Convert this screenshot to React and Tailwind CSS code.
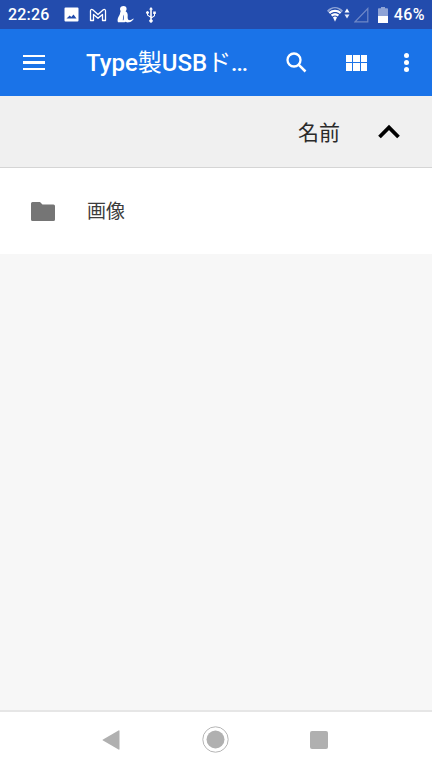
import React from 'react';

const CJK = "font-['Roboto','Noto_Sans_CJK_JP',sans-serif]";

function StatusBar() {
  return (
    <div className="h-[29px] bg-[#234cad] flex items-center text-white pl-[8px] pr-[7px]">
      <span className="text-[16px] font-medium leading-none tracking-[0.2px] w-[42px]">22:26</span>
      {/* picture */}
      <svg className="ml-[14px]" width="15" height="15" viewBox="0 0 15 15">
        <path fillRule="evenodd" fill="#fff" d="M1.5 0.5h12a1 1 0 0 1 1 1v12a1 1 0 0 1-1 1h-12a1 1 0 0 1-1-1v-12a1 1 0 0 1 1-1zM2.5 11.5h10l-3-4-2.2 2.6-1.6-1.6z" />
      </svg>
      {/* gmail-ish M */}
      <svg className="ml-[10px]" width="18" height="14" viewBox="0 0 18 14">
        <path d="M1.500 12.500V2.800c0-1.300 1.300-1.800 2.200-1L9 6.500l5.300-4.700c.9-.8 2.200-.3 2.200 1v9.700h-3V6.500L9 10.300 4.500 6.500v6z" fill="none" stroke="#fff" strokeWidth="1.300" strokeLinejoin="round" />
      </svg>
      {/* figure */}
      <svg className="ml-[10px]" width="17" height="18" viewBox="0 0 17 18">
        <path fill="#fff" d="M6.500 0c2 0 3.200 1.300 3.100 3 0 1-.4 1.700-1 2.200 1.400.7 2 2 2.100 3.600.1 1.500-.3 3 .2 4.300.3.800 1 1.200 1.900 1.200 1 0 2-.6 3.500-1.700l.4.400c-1.300 1.600-2.800 3-4.800 3.300-1.300.2-2.400 0-3.300-.6-.6.4-1.300.6-2.200.6H1c-.6-1.300-.5-2.800 0-4.200.5-1.500 1.500-2.800 1.900-4.200.3-1 .3-2 .8-2.900C3.200 4.300 3 3.700 3 3c0-1.700 1.500-3 3.500-3z" />
        <path fill="#234cad" d="M6.200 8.500c.9 1.500.8 3.300.4 5.200-.1.500-.5.700-.8.500.3-2 .4-3.700.4-5.700z" />
      </svg>
      {/* usb */}
      <svg className="ml-[11px]" width="12" height="16" viewBox="0 0 12 16">
        <path fill="#fff" d="M6 0l2 2.600H6.800v7.400l2.200-1.600V7H8.200V4.600h2.600V7h-.8v1.900L6.800 11.300v1.200a1.700 1.700 0 1 1-1.600 0V10.600L2 8.300V6.800a1.400 1.400 0 1 1 1 0v1l2.200 1.500V2.600H4z" />
      </svg>
      <div className="flex-1" />
      {/* wifi */}
      <svg width="16" height="15" viewBox="0 0 16 15">
        <path fill="#8ea3d6" d="M0 3.700C4.300-1.200 11.700-1.200 16 3.700l-1.500 1.700C11-.1 5-.1 1.500 5.400z" />
        <path fill="#fff" d="M1.700 5.200c3.500-3.300 9.100-3.300 12.600 0l-1.400 1.700c-2.800-2.400-7-2.400-9.800 0z" />
        <path fill="#fff" d="M3.900 7.700c2.400-2 5.800-2 8.200 0l-1.400 1.700c-1.600-1.200-3.800-1.200-5.400 0z" />
        <path fill="#fff" d="M6 10.200c1.200-.9 2.800-.9 4 0l-2 4.600z" />
      </svg>
      {/* data arrows */}
      <svg className="ml-[1px]" width="6" height="13" viewBox="0 0 6 13">
        <path fill="#fff" d="M3 0.500L5.500 4.500H0.500z" />
        <path fill="#e2e8f6" d="M0.500 6.500H5.500L3 10.500z" />
      </svg>
      {/* signal */}
      <svg className="ml-[4px]" width="15" height="16" viewBox="0 0 15 16">
        <path fill="none" stroke="#6f88c8" strokeWidth="1.200" d="M13.800 1.500V14.800H1z" />
      </svg>
      {/* battery */}
      <svg className="ml-[9px]" width="10" height="16" viewBox="0 0 10 16">
        <path fill="#8ea3d6" d="M3 0h4v1.300h2.200a.8.8 0 0 1 .8.8V9H0V2.100a.8.8 0 0 1 .8-.8H3z" />
        <path fill="#fff" d="M0 9h10v7H0z" />
      </svg>
      <span className="ml-[6px] text-[16px] font-medium leading-none tracking-[0.4px]">46%</span>
    </div>
  );
}

function Toolbar() {
  return (
    <div className="h-[67px] bg-[#1a73e8] flex items-center text-white">
      <div className="w-[86px] pl-[23px] shrink-0">
        <div className="w-[22px] flex flex-col gap-[4px]">
          <div className="h-[2.500px] bg-white" />
          <div className="h-[2.500px] bg-white" />
          <div className="h-[2.500px] bg-white" />
        </div>
      </div>
      <div className="w-[166px] shrink-0 text-[24px] font-medium leading-none whitespace-nowrap">
        Type<span className="font-normal">製</span>USB<span className="font-normal">ド</span>
        <span className="text-[20px] font-bold tracking-[-0.4px]">...</span>
      </div>
      <svg className="ml-[32px] -mt-[2px]" width="24" height="24" viewBox="0 0 24 24">
        <circle cx="10" cy="10" r="6.500" fill="none" stroke="#fff" strokeWidth="2.300" />
        <path d="M14.600 14.600L21.500 21.500" stroke="#fff" strokeWidth="2.500" />
      </svg>
      <div className="ml-[38px] w-[21px] grid grid-cols-3 gap-[1px]">
        {[0, 1, 2, 3, 4, 5].map((i) => (
          <div key={i} className="h-[7.500px] bg-white" />
        ))}
      </div>
      <div className="ml-[37px] flex flex-col gap-[2px]">
        <div className="w-[5px] h-[5px] rounded-full bg-white" />
        <div className="w-[5px] h-[5px] rounded-full bg-white" />
        <div className="w-[5px] h-[5px] rounded-full bg-white" />
      </div>
    </div>
  );
}

export default function App() {
  return (
    <div className={`w-[432px] h-[768px] flex flex-col bg-[#f7f7f7] overflow-hidden ${CJK}`}>
      <StatusBar />
      <Toolbar />

      {/* sort header */}
      <div className="h-[72px] bg-[#f0f0f0] border-b border-[#d5d5d5] flex items-center justify-end">
        <span className="text-[21px] text-[#2a2a2a] leading-none mr-[37px] pt-[3px]">名前</span>
        <svg className="mr-[31px]" width="24" height="15" viewBox="0 0 24 15">
          <path d="M2.500 13L12 3.500L21.500 13" fill="none" stroke="#000" strokeWidth="3.800" />
        </svg>
      </div>

      {/* row */}
      <div className="h-[86px] bg-white flex items-center">
        <svg className="ml-[31px]" width="24" height="19" viewBox="0 0 24 19">
          <path fill="#757575" d="M1.500 0h7.500l2.500 2.500h11a1.500 1.500 0 0 1 1.500 1.500V17.500a1.500 1.500 0 0 1-1.500 1.500H1.500A1.500 1.500 0 0 1 0 17.500V1.500A1.500 1.500 0 0 1 1.500 0z" />
        </svg>
        <span className="ml-[32px] text-[19px] text-[#3c3c3c] leading-none">画像</span>
      </div>

      <div className="flex-1" />

      {/* nav bar */}
      <div className="h-[58px] bg-white border-t-2 border-[#e6e6e6] flex items-center justify-center pb-[1px] pr-[3px]">
        <svg width="18" height="20" viewBox="0 0 18 20">
          <path fill="#b0b0b0" d="M17.500 1v18a.7.7 0 0 1-1 .6L1 10.600a.7.7 0 0 1 0-1.200L16.500.4a.7.7 0 0 1 1 .6z" />
        </svg>
        <svg className="ml-[82px]" width="27" height="27" viewBox="0 0 27 27">
          <circle cx="13.500" cy="13.500" r="12.700" fill="none" stroke="#b6b6b6" strokeWidth="1" />
          <circle cx="13.500" cy="13.500" r="9" fill="#b0b0b0" />
        </svg>
        <div className="ml-[81px] w-[18px] h-[18px] rounded-[2px] bg-[#b0b0b0]" />
      </div>
    </div>
  );
}
